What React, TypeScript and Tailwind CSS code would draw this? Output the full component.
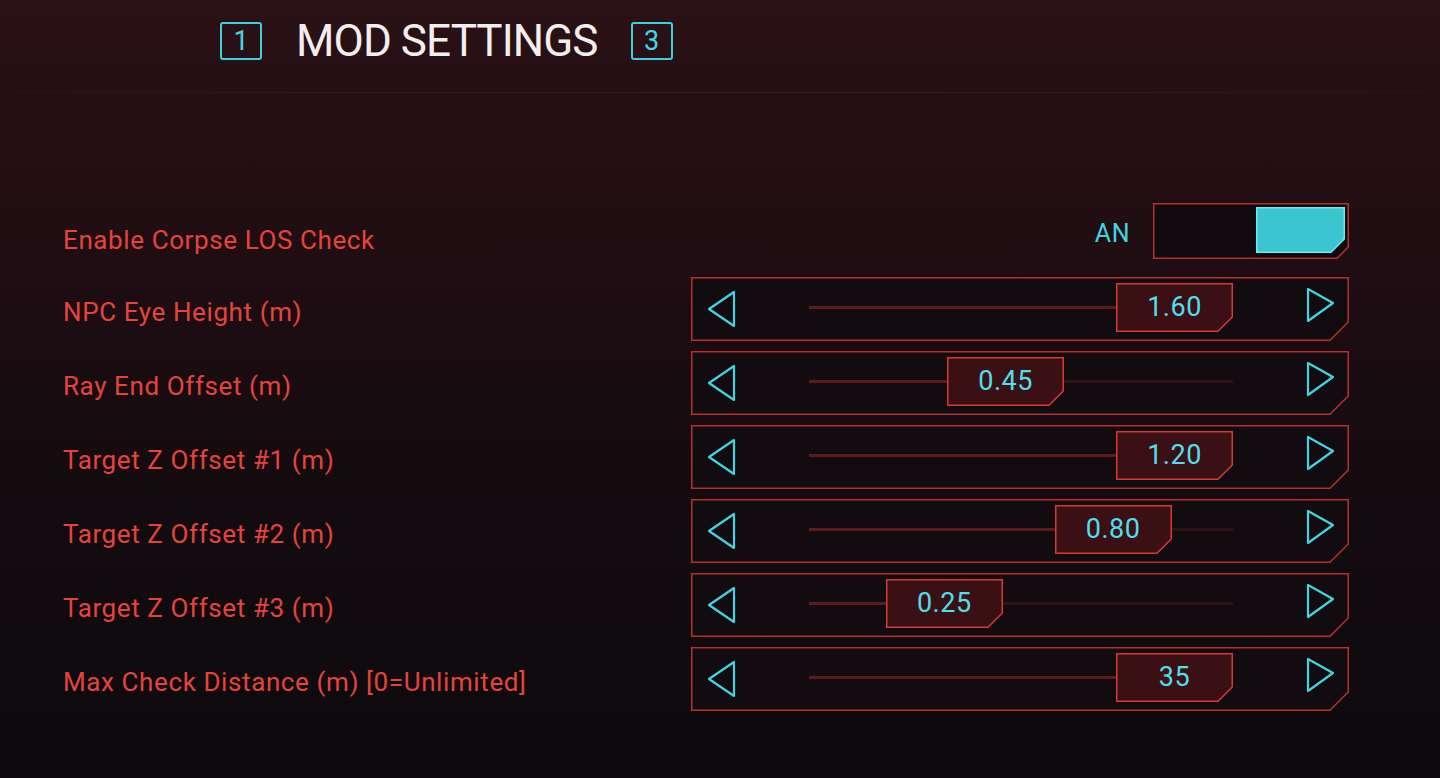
import React from "react";

const FONT = { fontFamily: "Roboto, 'Liberation Sans', sans-serif" };

type Row = { label: string; value: string; pos: number };

const ROWS: Row[] = [
  { label: "NPC Eye Height (m)", value: "1.60", pos: 1 },
  { label: "Ray End Offset (m)", value: "0.45", pos: 0.45 },
  { label: "Target Z Offset #1 (m)", value: "1.20", pos: 1 },
  { label: "Target Z Offset #2 (m)", value: "0.80", pos: 0.8 },
  { label: "Target Z Offset #3 (m)", value: "0.25", pos: 0.25 },
  { label: "Max Check Distance (m) [0=Unlimited]", value: "35", pos: 1 },
];

// chamfered frame (bottom-right corner cut), drawn behind the content
function Frame({
  w,
  h,
  cut,
  fill,
  stroke,
  sw = 1.5,
}: {
  w: number;
  h: number;
  cut: number;
  fill: string;
  stroke: string;
  sw?: number;
}) {
  const o = sw / 2;
  return (
    <svg className="absolute inset-0 pointer-events-none" width={w} height={h}>
      <polygon
        points={`${o},${o} ${w - o},${o} ${w - o},${h - cut} ${w - cut},${h - o} ${o},${h - o}`}
        fill={fill}
        stroke={stroke}
        strokeWidth={sw}
        strokeLinejoin="miter"
      />
    </svg>
  );
}

function Arrow({ dir }: { dir: "l" | "r" }) {
  return (
    <svg width="30" height="38" viewBox="0 0 30 38" className="shrink-0">
      {dir === "l" ? (
        <polygon points="27,2 27,36 2,19" fill="none" stroke="#3fd6e2" strokeWidth="2.2" strokeLinejoin="round" />
      ) : (
        <polygon points="3,2 3,34 28,16" fill="none" stroke="#3fd6e2" strokeWidth="2.2" strokeLinejoin="round" />
      )}
    </svg>
  );
}

function KeyBox({ n }: { n: string }) {
  return (
    <div className="w-[42px] h-[38px] border-2 border-[#3fd0dc] rounded-[3px] flex items-center justify-center text-[27px] text-[#45d8e4] leading-none">
      {n}
    </div>
  );
}

function Slider({ value, pos }: { value: string; pos: number }) {
  const trackW = 424;
  const boxW = 117;
  const left = pos * (trackW - boxW);
  return (
    <div className="relative w-[658px] h-[64px] flex items-center pl-[16px] pr-[14px]">
      <Frame w={658} h={64} cut={19} fill="#120b10" stroke="#b8302c" />
      <div className="relative flex items-center w-full">
        <Arrow dir="l" />
        <div className="relative ml-[72px] w-[424px] h-[49px] -mt-[3px]">
          <div className="absolute left-0 right-0 top-[23px] h-[3px] bg-[#2c1317]" />
          <div
            className="absolute left-0 top-[23px] h-[3px] bg-[#5e1b1e]"
            style={{ width: left + 4 }}
          />
          <div
            className="absolute top-0 h-[49px] flex items-center justify-center"
            style={{ left, width: boxW }}
          >
            <Frame w={boxW} h={49} cut={15} fill="#3a1014" stroke="#d63a32" />
            <span className="relative text-[27px] text-[#4fdfea] leading-none tracking-[0.5px]">{value}</span>
          </div>
        </div>
        <div className="ml-auto -mt-[7px]">
          <Arrow dir="r" />
        </div>
      </div>
    </div>
  );
}

function Toggle() {
  return (
    <div className="flex items-center">
      <span className="text-[25px] text-[#3fd6e2] leading-none mr-[23px] mt-[4px] tracking-[0.5px]">AN</span>
      <div className="relative w-[196px] h-[56px] flex justify-end pt-[4px] pr-[4px]">
        <Frame w={196} h={56} cut={12} fill="#100a0e" stroke="#b8302c" />
        <div className="relative w-[89px] h-[46px]">
          <Frame w={89} h={46} cut={14} fill="#3bc5d0" stroke="#6fe9f2" sw={1.5} />
        </div>
      </div>
    </div>
  );
}

export default function App() {
  return (
    <div
      className="w-[1440px] h-[778px] overflow-hidden bg-[linear-gradient(180deg,#2a1116_0%,#1e0d12_35%,#130b0f_65%,#0c0a0d_100%)]"
      style={FONT}
    >
      <div className="flex items-center h-[79px] pl-[220px] pt-[3px]">
        <KeyBox n="1" />
        <span className="ml-[34px] mr-[33px] text-[44px] text-[#f3eeee] leading-none tracking-[-0.9px]">MOD SETTINGS</span>
        <KeyBox n="3" />
      </div>
      <div className="mt-[13px] h-px bg-[linear-gradient(90deg,#2a1218,#36181d_30%,#3a1a1f_60%,#2a1218)]" />

      <div className="mt-[110px] pl-[63px] pr-[91px]">
        <div className="flex items-center justify-between h-[56px]">
          <span className="text-[26px] text-[#e5443a] leading-none tracking-[0.6px] mt-[17px]">Enable Corpse LOS Check</span>
          <Toggle />
        </div>
        <div className="mt-[18px] flex flex-col gap-[10px]">
          {ROWS.map((r) => (
            <div key={r.label} className="flex items-center justify-between h-[64px]">
              <span className="text-[26px] text-[#e5443a] leading-none tracking-[0.6px] mt-[6px]">{r.label}</span>
              <Slider value={r.value} pos={r.pos} />
            </div>
          ))}
        </div>
      </div>
    </div>
  );
}
